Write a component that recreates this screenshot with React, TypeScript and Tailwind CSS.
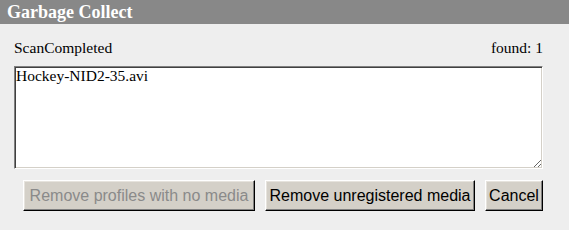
export default function App() {
  const btn =
    "h-[31px] px-0 whitespace-nowrap bg-[#d4d0c8] border border-t-white border-l-white border-b-black border-r-black shadow-[inset_-1px_-1px_#808080,inset_1px_1px_#e6e3dd] text-[16px] leading-none font-['Liberation_Sans',Arial,sans-serif]";

  return (
    <div className="w-[569px] h-[230px] bg-[#eeeeee] font-['Liberation_Serif','Times_New_Roman',serif] text-black">
      <div className="h-[24px] bg-[#888888] pl-[7px] text-white font-bold text-[18px] leading-[24px]">
        Garbage Collect
      </div>
      <div className="pl-[14px] pr-[26px]">
        <div className="flex justify-between pt-[15px] text-[15.5px] leading-[18px]">
          <span>ScanCompleted</span>
          <span>found: 1</span>
        </div>
        <textarea
          readOnly
          defaultValue="Hockey-NID2-35.avi"
          className="block mt-[9px] w-full h-[103px] bg-white px-[1px] py-0 text-[15.5px] leading-[18px] font-['Liberation_Serif','Times_New_Roman',serif] border border-t-[#808080] border-l-[#808080] border-b-white border-r-white shadow-[inset_1px_1px_#404040,inset_-1px_-1px_#d4d0c8] outline-none"
        />
        <div className="flex justify-end gap-[10px] mt-[11px]">
          <button className={btn + " w-[232px] text-[#8a8a8a]"}>Remove profiles with no media</button>
          <button className={btn + " w-[210px]"}>Remove unregistered media</button>
          <button className={btn + " w-[58px]"}>Cancel</button>
        </div>
      </div>
    </div>
  );
}
